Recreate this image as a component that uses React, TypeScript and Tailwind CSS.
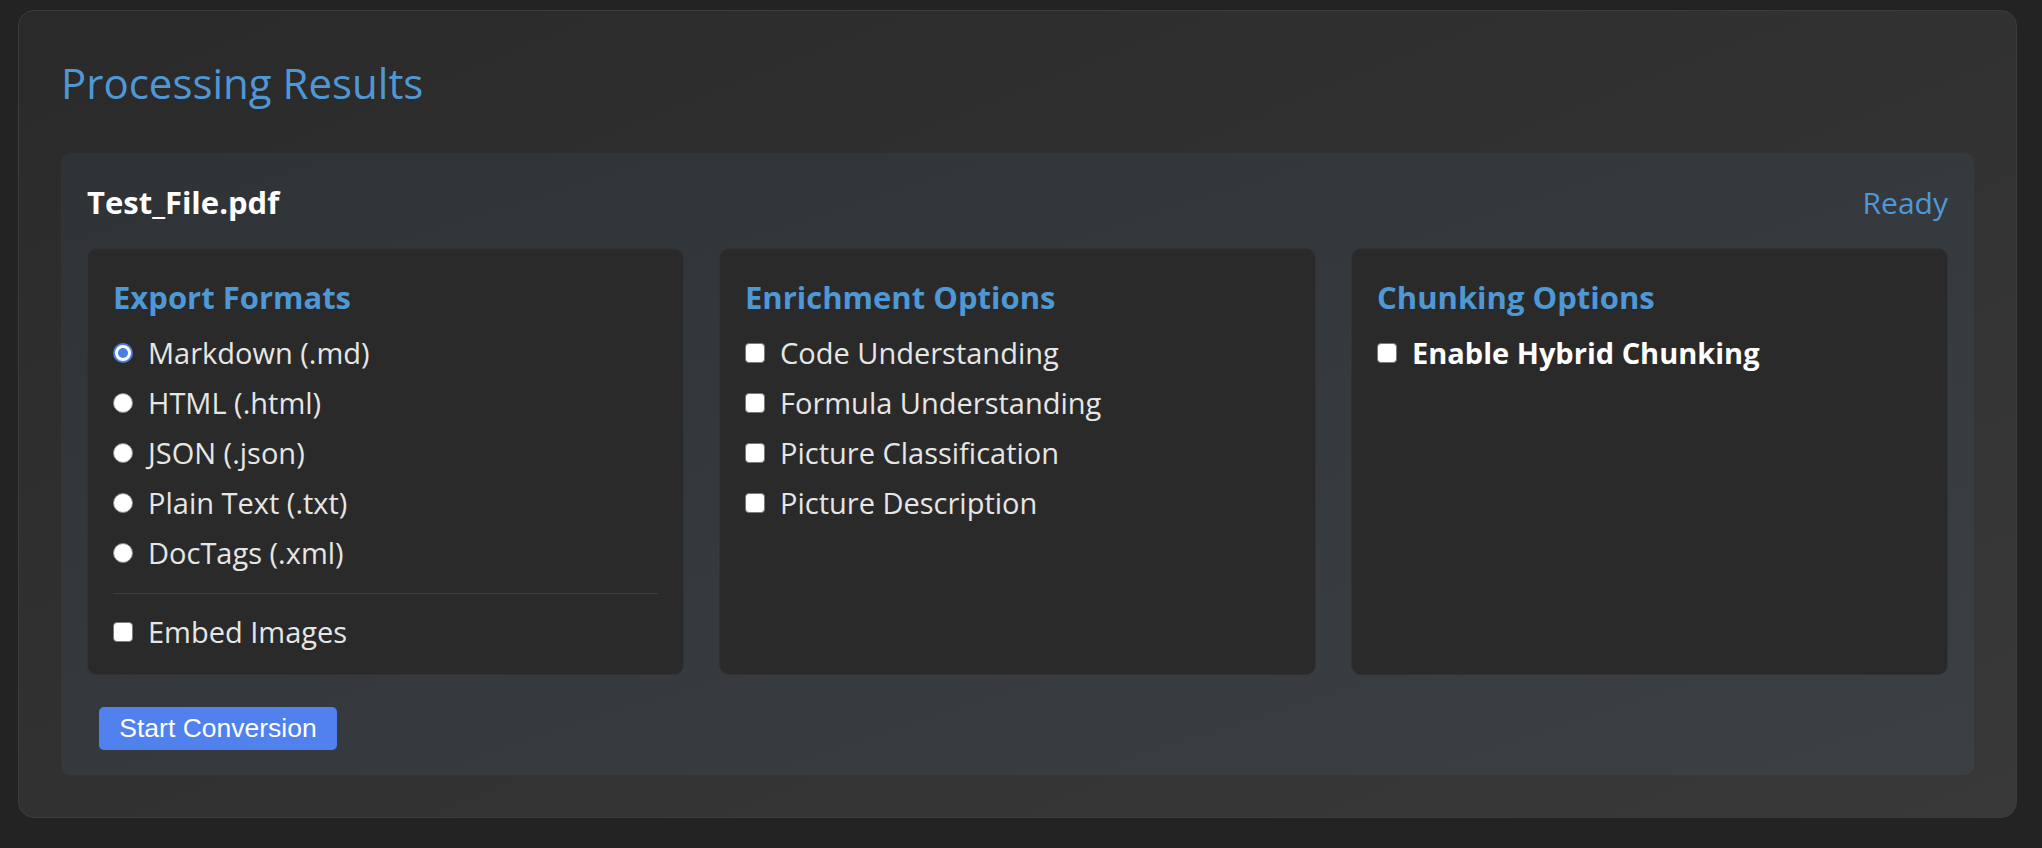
import React from 'react'

const font = { fontFamily: '"Open Sans", "Noto Sans", sans-serif' }

function Radio({ checked }: { checked?: boolean }) {
  if (checked) {
    return (
      <span className="flex items-center justify-center w-[20px] h-[20px] rounded-full border-2 border-[#4a7ee0] bg-white shrink-0">
        <span className="w-[10px] h-[10px] rounded-full bg-[#4a7ee0]" />
      </span>
    )
  }
  return <span className="w-[20px] h-[20px] rounded-full bg-white border border-[#8a8a8a] shrink-0" />
}

function Check() {
  return <span className="w-[20px] h-[20px] rounded-[4px] bg-white border border-[#7a7a7a] shrink-0" />
}

function Row({ children, bold }: { children: React.ReactNode; bold?: boolean }) {
  return (
    <label className={ `flex items-center gap-[15px] h-[50px] text-[29px] ${ bold ? 'font-bold text-white' : 'text-[#e6e6e6]' }` }>
      { children }
    </label>
  )
}

function Card({ title, children }: { title: string; children: React.ReactNode }) {
  return (
    <div className="flex flex-col bg-[#2a2a2a] border border-[#323232] rounded-[10px] px-[25px] pt-[25px] pb-[17px]">
      <h4 className="h-[46px] flex items-center mb-[8px] text-[31px] font-bold text-[#4f98d6]">{ title }</h4>
      { children }
    </div>
  )
}

export default function App() {
  const formats = [ 'Markdown (.md)', 'HTML (.html)', 'JSON (.json)', 'Plain Text (.txt)', 'DocTags (.xml)' ]
  const enrich = [ 'Code Understanding', 'Formula Understanding', 'Picture Classification', 'Picture Description' ]

  return (
    <div className="min-h-[848px] bg-[#232323] pt-[10px] pl-[18px]" style={ font }>
      <div className="w-[1999px] rounded-[16px] border border-[#3c3c3c] bg-gradient-to-br from-[#2a2a2a] to-[#393939] px-[42px] pt-[47px] pb-[42px]">
        <h2 className="h-[48px] flex items-center mb-[47px] text-[42px] text-[#4f98d6]">Processing Results</h2>

        <div className="rounded-[10px] bg-gradient-to-br from-[#2f3337] to-[#3b4045] px-[26px] pt-[26px] pb-[25px]">
          <div className="h-[46px] flex items-center justify-between mb-[23px]">
            <h3 className="text-[31px] font-bold text-white">Test_File.pdf</h3>
            <span className="text-[30px] text-[#4f98d6]">Ready</span>
          </div>

          <div className="grid grid-cols-3 gap-[35px]">
            <Card title="Export Formats">
              { formats.map((f, i) => (
                <Row key={ f }><Radio checked={ i === 0 }/>{ f }</Row>
              )) }
              <div className="h-px bg-[#3d3d3d] mt-[15px] mb-[13px]"/>
              <Row><Check/>Embed Images</Row>
            </Card>

            <Card title="Enrichment Options">
              { enrich.map(e => (
                <Row key={ e }><Check/>{ e }</Row>
              )) }
            </Card>

            <Card title="Chunking Options">
              <Row bold><Check/>Enable Hybrid Chunking</Row>
            </Card>
          </div>

          <button
            className="mt-[32px] ml-[12px] h-[43px] w-[238px] rounded-[5px] bg-[#5181ec] text-white text-[26.5px]"
            style={ { fontFamily: '"Liberation Sans", Arial, sans-serif' } }>
            Start Conversion
          </button>
        </div>
      </div>
    </div>
  )
}
